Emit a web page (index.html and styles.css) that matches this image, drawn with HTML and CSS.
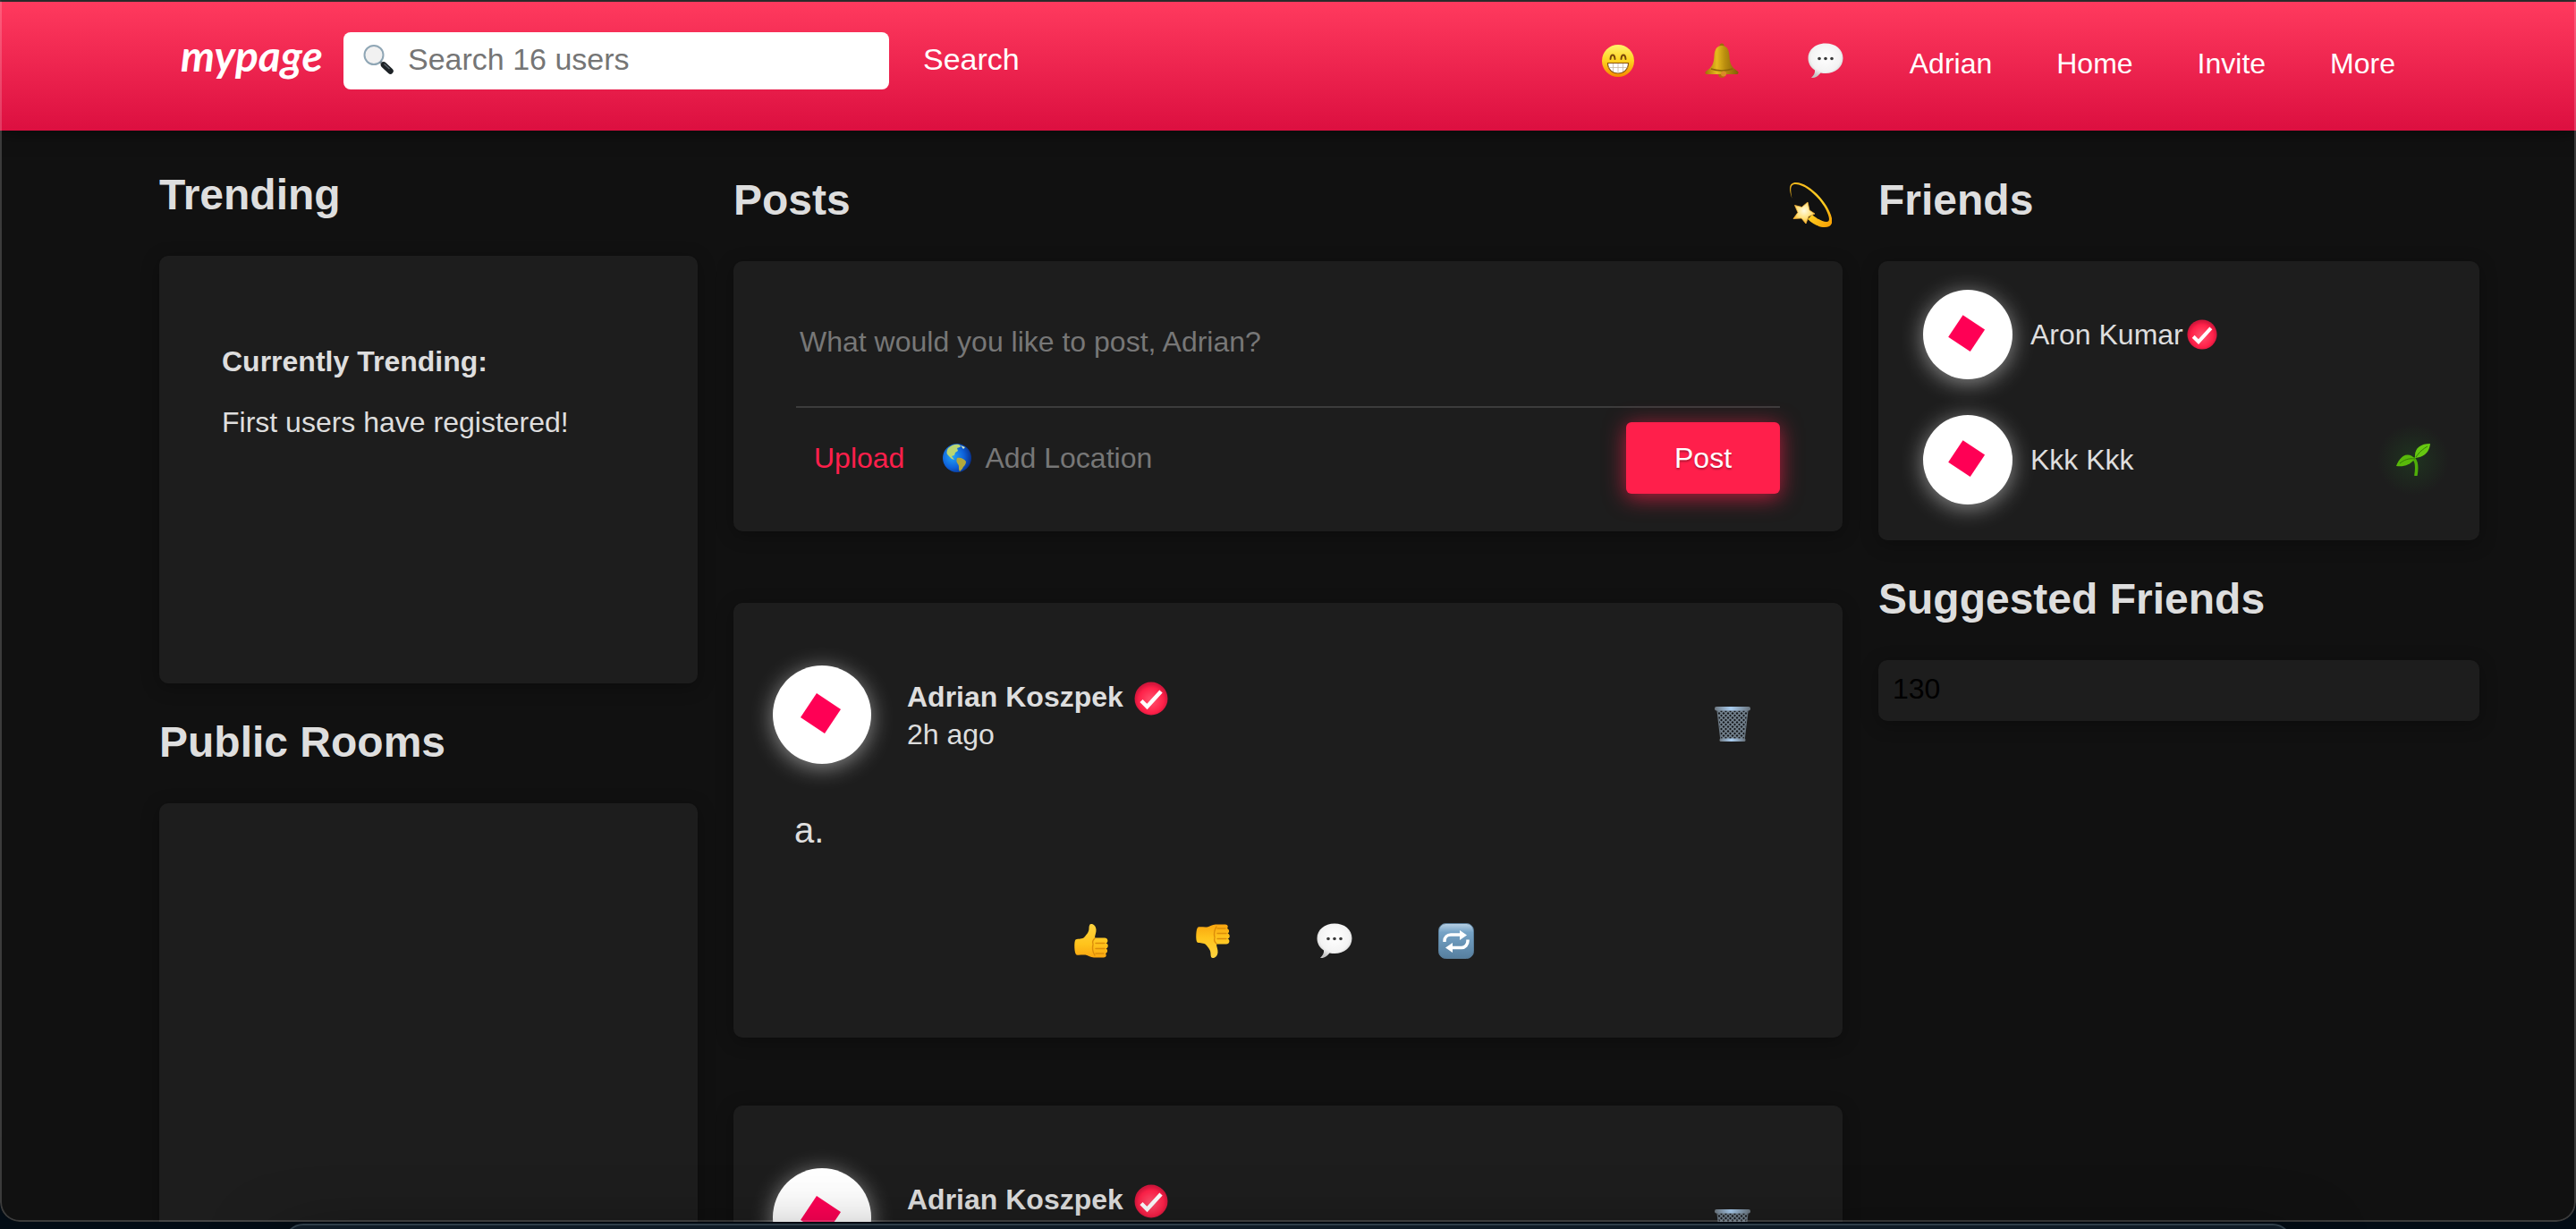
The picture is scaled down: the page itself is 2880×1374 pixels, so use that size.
FILE: index.html
```html
<!DOCTYPE html>
<html lang="en">
<head>
<meta charset="utf-8">
<meta name="viewport" content="width=device-width, initial-scale=1">
<title>mypage</title>
<link rel="stylesheet" href="styles.css">
</head>
<body>
<svg class="sprite" aria-hidden="true">
  <defs>
    <linearGradient id="g-face" x1="0" y1="0" x2="0" y2="1"><stop offset="0" stop-color="#fff36b"/><stop offset=".5" stop-color="#ffd21f"/><stop offset="1" stop-color="#f58a00"/></linearGradient>
    <linearGradient id="g-bell" x1="0" y1="0" x2="1" y2="0"><stop offset="0" stop-color="#a06e05"/><stop offset=".35" stop-color="#e6ba1e"/><stop offset=".6" stop-color="#b98d0e"/><stop offset="1" stop-color="#815b06"/></linearGradient>
    <radialGradient id="g-bubble" cx=".5" cy=".4" r=".6"><stop offset="0" stop-color="#fff"/><stop offset=".7" stop-color="#f3f3f3"/><stop offset="1" stop-color="#c4c4c4"/></radialGradient>
    <linearGradient id="g-hand" x1="0" y1="0" x2="0" y2="1"><stop offset="0" stop-color="#ffd340"/><stop offset=".6" stop-color="#ffc41c"/><stop offset="1" stop-color="#f9a510"/></linearGradient>
    <linearGradient id="g-repeat" x1="0" y1="0" x2="0" y2="1"><stop offset="0" stop-color="#b9d2e6"/><stop offset=".25" stop-color="#76a3c6"/><stop offset="1" stop-color="#567f9f"/></linearGradient>
    <radialGradient id="g-globe" cx=".35" cy=".45" r=".65"><stop offset="0" stop-color="#23a4f7"/><stop offset=".6" stop-color="#0f62da"/><stop offset="1" stop-color="#07318e"/></radialGradient>
    <radialGradient id="g-check" cx=".5" cy=".55" r=".5"><stop offset="0" stop-color="#ff5470"/><stop offset=".75" stop-color="#ff2149"/><stop offset="1" stop-color="#d4163c"/></radialGradient>
    <linearGradient id="g-orbit" x1="0" y1="0" x2="1" y2="1"><stop offset="0" stop-color="#f3b41c"/><stop offset=".6" stop-color="#ffcf23"/><stop offset="1" stop-color="#f79b00"/></linearGradient>
    <radialGradient id="g-star" cx=".5" cy=".4" r=".6"><stop offset="0" stop-color="#fffbe0"/><stop offset=".6" stop-color="#ffe07a"/><stop offset="1" stop-color="#f7b022"/></radialGradient>
    <linearGradient id="g-metal" x1="0" y1="0" x2="1" y2="0"><stop offset="0" stop-color="#6d7780"/><stop offset=".45" stop-color="#a9cdf0"/><stop offset="1" stop-color="#67717a"/></linearGradient>
    <pattern id="p-mesh" width="5" height="5" patternUnits="userSpaceOnUse"><path d="M0 0l5 5M5 0L0 5" stroke="#75838f" stroke-width="1.5"/></pattern>
  </defs>
  <symbol id="i-search" viewBox="0 0 34 34">
    <circle cx="12" cy="12.500" r="10.500" fill="#f1f1f1" stroke="#8fa6b5" stroke-width="2"/>
    <path d="M19 20l4 3.500" stroke="#7a8790" stroke-width="3"/>
    <path d="M23 23.500l7.500 7" stroke="#1d2226" stroke-width="6.500" stroke-linecap="round"/>
    <path d="M23.500 22.500l6 5.500" stroke="#59636b" stroke-width="1.500"/>
  </symbol>
  <symbol id="i-smile" viewBox="0 0 40 40">
    <circle cx="20" cy="20" r="18" fill="url(#g-face)"/>
    <path d="M11.500 18c.5-6 4.500-6 5 0M23.500 18c.5-6 4.500-6 5 0" fill="none" stroke="#7a4708" stroke-width="2" stroke-linecap="round"/>
    <path d="M8.500 22.500h23c0 7-5 11.500-11.500 11.500S8.500 29.500 8.500 22.500z" fill="#fff" stroke="#8a5310" stroke-width="1.200"/>
    <path d="M9.500 27.500h21M14.500 23v9M20 23v11M25.500 23v9" stroke="#c9b9a2" stroke-width=".8"/>
  </symbol>
  <symbol id="i-bell" viewBox="0 0 40 40">
    <circle cx="20" cy="35" r="4" fill="#b5690f"/>
    <circle cx="20" cy="3" r="2.500" fill="#9a6f08"/>
    <path d="M20 3c-6 0-8 5-8.500 11-.5 9-2 13-9 17.500-2 1.500-1 3.500 1 3.500h33c2 0 3-2 1-3.500-7-4.500-8.500-8.500-9-17.500C28 8 26 3 20 3z" fill="url(#g-bell)"/>
    <path d="M8 29c7 2.500 17 2.500 24 0" fill="none" stroke="#8d6508" stroke-width="1.500"/>
    <circle cx="22" cy="34.500" r="3" fill="#d98b26"/>
  </symbol>
  <symbol id="i-bubble" viewBox="0 0 40 40">
    <path d="M20 0.500C9 .5.500 7.500.500 17c0 6 3 10.500 7.500 13.500.5 3-1.500 6-4 8.500 5 .5 8-2.500 10.500-5.500 2 .5 3.500.5 5.500.5 11 0 19.500-7 19.500-17S31 .5 20 .5z" fill="url(#g-bubble)"/>
    <g fill="#3a3a3a"><circle cx="13" cy="17.500" r="1.800"/><circle cx="20" cy="17.500" r="1.800"/><circle cx="27" cy="17.500" r="1.800"/></g>
  </symbol>
  <symbol id="i-thumb" viewBox="0 0 40 40">
    <path d="M2.500 18.500C6 17 10 18.500 12.500 15.500c2.500-3 5-5.500 5-9.500 0-3 .5-5 2.500-5 3 0 5 2.500 5.500 6 .4 3.500-1.500 6.500-1.500 9.500h11c4 0 4.500 5 1.500 6 3 .7 3 5 0 6 2.500 1 2 5-.8 5.500 2 1.500 1 4.500-1.700 4.500H23c-4 0-6-2.500-9.500-3-3.500-.3-7 .5-10 0C1 34.500.5 20.500 2.500 18.500z" fill="url(#g-hand)"/>
    <path d="M35 22.500H25M35 28.500H25M34 34H25M24 17c-2 2-3 4-2 6M22 24c-1 4 0 9 2 12" fill="none" stroke="#dc8d0a" stroke-width="1.400" stroke-linecap="round"/>
  </symbol>
  <symbol id="i-repeat" viewBox="0 0 40 40">
    <rect x=".5" y=".5" width="39" height="39" rx="8" fill="url(#g-repeat)" stroke="#587b96"/>
    <path d="M7 21v-1c0-4 3-7 7-7h11M33 18.500v1.500c0 4-3 7.500-7 7.500H15" fill="none" stroke="#fff" stroke-width="3.500"/>
    <path d="M24 8l8 5.500-8 5.500zM16 22l-8 5.500 8 5.500z" fill="#fff"/>
  </symbol>
  <symbol id="i-globe" viewBox="0 0 34 34">
    <circle cx="17" cy="17" r="16" fill="url(#g-globe)"/>
    <path d="M7 6c4-4 9-5 12-4 2 1 3 2 1 3l-3 1 1 3-3 2-1 3-3 1 3 4-3-1-4-4C5 12 5 9 7 6z" fill="#b9d673"/>
    <path d="M17 17c4-1 8 1 10 4 0 4-3 5-4 8l-3 3c-2-3 0-6-2-8-2-3-2-4-1-7z" fill="#b3a83c"/>
    <path d="M21 3l5 2-2 2z" fill="#d7ecc0"/>
  </symbol>
  <symbol id="i-check" viewBox="0 0 38 38">
    <circle cx="19" cy="19" r="18.500" fill="url(#g-check)"/>
    <path d="M8 21.500l6.500 6.500L30 11" fill="none" stroke="#fff" stroke-width="4.500"/>
  </symbol>
  <symbol id="i-dizzy" viewBox="0 0 48 50">
    <path d="M3.500 18C-1 5 1 0 8 0c14 0 36 22 40 40 1.500 7-2 10-8 10-6 0-13-3-19-9l5-5c6 5 12 8 16 8 3 0 3.500-2 2.500-6C41 24 22 3 8 2c-6-.5-7 4-4.500 16z" fill="url(#g-orbit)"/>
    <path d="M21 22l2 9 6 4-7 3-3 8-5-6-9 .500 5-7-3.500-8 8 2z" fill="url(#g-star)" stroke="#f0b038" stroke-width=".8"/>
  </symbol>
  <symbol id="i-bin" viewBox="0 0 40 40">
    <path d="M3 4h34l-4 34H7z" fill="#14171a"/>
    <path d="M3 4h34l-4 34H7z" fill="url(#p-mesh)" stroke="#66727c" stroke-width="1.200"/>
    <rect x="5.500" y="35.500" width="29" height="3.500" rx="1.500" fill="url(#g-metal)"/>
    <rect x="0" y="0" width="40" height="4.500" rx="2" fill="url(#g-metal)"/>
  </symbol>
  <symbol id="i-seedling" viewBox="0 0 38 36">
    <path d="M20 17c4 5 3 12 2 18" fill="none" stroke="#4fae08" stroke-width="3.500" stroke-linecap="round"/>
    <path d="M21 17C14 9 5 12 0 25c9 1 15-1 21-8z" fill="#58b80a"/>
    <path d="M21 16C20 5 27 0 38 0c-1 10-7 15-17 16z" fill="#66c811"/>
    <path d="M4 22c5-4 10-6 17-5M22 15c4-6 8-9 13-12" fill="none" stroke="#357d05" stroke-width="1"/>
  </symbol>
  <symbol id="i-diamond" viewBox="0 0 110 110">
    <path d="M49 31l27 18-18 27-27-18z" fill="#ff0055"/>
  </symbol>
</svg>

<div class="window">
  <header class="topbar">
    <a class="logo" href="#">mypage</a>
    <form class="search" role="search">
      <label class="search-box">
        <svg class="search-icon" aria-hidden="true"><use href="#i-search"/></svg>
        <input class="search-input" type="search" aria-label="Search users" placeholder="Search 16 users">
      </label>
      <button class="search-button" type="button">Search</button>
    </form>
    <nav class="nav">
      <button class="nav-icon" type="button" aria-label="Mood"><svg><use href="#i-smile"/></svg></button>
      <button class="nav-icon" type="button" aria-label="Notifications"><svg><use href="#i-bell"/></svg></button>
      <button class="nav-icon" type="button" aria-label="Messages"><svg><use href="#i-bubble"/></svg></button>
      <a class="nav-link" href="#">Adrian</a>
      <a class="nav-link" href="#">Home</a>
      <a class="nav-link" href="#">Invite</a>
      <a class="nav-link" href="#">More</a>
    </nav>
  </header>

  <main class="columns">
    <aside class="column">
      <h2 class="heading">Trending</h2>
      <section class="card trending">
        <strong>Currently Trending:</strong>
        <p>First users have registered!</p>
      </section>
      <h2 class="heading">Public Rooms</h2>
      <section class="card rooms"></section>
    </aside>

    <section class="column column-low">
      <div class="heading-row">
        <h2 class="heading">Posts</h2>
        <button class="shuffle" type="button" aria-label="Surprise me"><svg><use href="#i-dizzy"/></svg></button>
      </div>
      <form class="card composer">
        <textarea class="composer-text" aria-label="New post" placeholder="What would you like to post, Adrian?"></textarea>
        <div class="composer-tools">
          <button class="upload" type="button">Upload</button>
          <label class="location">
            <svg class="location-icon" aria-hidden="true"><use href="#i-globe"/></svg>
            <input class="location-input" type="text" aria-label="Location" placeholder="Add Location">
          </label>
          <button class="post-button" type="button">Post</button>
        </div>
      </form>

      <div class="feed">
        <article class="card post">
          <div class="post-head">
            <svg class="avatar avatar-large" aria-hidden="true"><use href="#i-diamond"/></svg>
            <div class="post-meta">
              <div class="author"><strong>Adrian Koszpek</strong><svg class="badge-large" aria-hidden="true"><use href="#i-check"/></svg></div>
              <time>2h ago</time>
            </div>
            <button class="delete" type="button" aria-label="Delete post"><svg><use href="#i-bin"/></svg></button>
          </div>
          <p class="post-text">a.</p>
          <div class="actions">
            <button class="action" type="button" aria-label="Like"><svg><use href="#i-thumb"/></svg></button>
            <button class="action action-down" type="button" aria-label="Dislike"><svg><use href="#i-thumb"/></svg></button>
            <button class="action" type="button" aria-label="Comment"><svg><use href="#i-bubble"/></svg></button>
            <button class="action" type="button" aria-label="Repost"><svg><use href="#i-repeat"/></svg></button>
          </div>
        </article>
        <article class="card post">
          <div class="post-head">
            <svg class="avatar avatar-large" aria-hidden="true"><use href="#i-diamond"/></svg>
            <div class="post-meta">
              <div class="author"><strong>Adrian Koszpek</strong><svg class="badge-large" aria-hidden="true"><use href="#i-check"/></svg></div>
            </div>
            <button class="delete" type="button" aria-label="Delete post"><svg><use href="#i-bin"/></svg></button>
          </div>
        </article>
      </div>
    </section>

    <aside class="column column-low">
      <h2 class="heading">Friends</h2>
      <ul class="card friends">
        <li class="friend">
          <svg class="avatar" aria-hidden="true"><use href="#i-diamond"/></svg>
          <a class="friend-name" href="#">Aron Kumar<svg class="badge" aria-hidden="true"><use href="#i-check"/></svg></a>
        </li>
        <li class="friend">
          <svg class="avatar" aria-hidden="true"><use href="#i-diamond"/></svg>
          <a class="friend-name" href="#">Kkk Kkk</a>
          <span class="newcomer"><svg aria-hidden="true"><use href="#i-seedling"/></svg></span>
        </li>
      </ul>
      <h2 class="heading">Suggested Friends</h2>
      <section class="card suggested">130</section>
    </aside>
  </main>
</div>
<div class="desktop-strip"><div class="front-window"></div></div>
</body>
</html>
```

FILE: styles.css
```css
* {
  box-sizing: border-box;
}

html {
  overflow: hidden;
}

body {
  margin: 0;
  height: 100vh;
  display: flex;
  flex-direction: column;
  overflow: hidden;
  background: #030c15;
  color: #dedede;
  font-family: "Liberation Sans", Arial, sans-serif;
  font-size: 32px;
  line-height: 40px;
}

.sprite {
  position: absolute;
  width: 0;
  height: 0;
}

button,
input,
textarea {
  margin: 0;
  padding: 0;
  border: 0;
  outline: 0;
  background: none;
  color: inherit;
  font: inherit;
}

button {
  cursor: pointer;
}

a {
  color: inherit;
  text-decoration: none;
}

p,
h2,
ul {
  margin: 0;
  padding: 0;
}

svg {
  display: block;
}

/* window frame */
.window {
  position: relative;
  flex: 1;
  min-height: 0;
  padding-top: 2px;
  overflow: hidden;
  border-radius: 0 0 22px 22px;
  background: #111;
}

.window::after {
  content: "";
  position: absolute;
  inset: 0;
  border: 2px solid rgba(255, 255, 255, 0.18);
  border-top-color: rgba(255, 255, 255, 0.12);
  border-radius: 0 0 22px 22px;
  pointer-events: none;
}

.desktop-strip {
  position: relative;
  flex: 0 0 8px;
  min-height: 0;
  padding: 2px 11% 0;
}

.front-window {
  height: 60vh;
  border: 2px solid #2f3e49;
  border-radius: 22px;
  background: #101c27;
  box-shadow: 0 30px 80px rgba(0, 0, 0, 0.6);
}

/* top bar */
.topbar {
  position: relative;
  display: flex;
  align-items: flex-start;
  justify-content: space-between;
  height: 144px;
  padding: 34px 202px 0;
  background: linear-gradient(#ff3a5e, #dc0f40);
  box-shadow: 0 0 20px rgba(0, 0, 0, 0.6);
  color: #fff;
}

.logo {
  flex: 0 0 182px;
  font-family: Lato, sans-serif;
  font-size: 48px;
  font-style: italic;
  font-weight: 700;
  line-height: 52px;
}

.search {
  display: flex;
  flex: 1;
  font-size: 34px;
}

.search-box {
  display: flex;
  align-items: center;
  gap: 16px;
  flex: 0 1 610px;
  height: 64px;
  padding: 0 22px 4px;
  border-radius: 8px;
  background: #fff;
}

.search-icon {
  flex: none;
  width: 34px;
  height: 34px;
}

.search-input {
  flex: 1;
  min-width: 0;
  color: #222;
}

.search-input::placeholder {
  color: #757575;
  opacity: 1;
}

.search-button {
  height: 64px;
  padding: 0 38px 4px;
}

.nav {
  display: flex;
  gap: 72px;
}

.nav-icon {
  display: flex;
  align-items: center;
  justify-content: center;
  width: 44px;
  height: 64px;
}

.nav-icon svg,
.action svg,
.delete svg {
  width: 40px;
  height: 40px;
}

.nav-link {
  line-height: 70px;
}

/* page columns */
.columns {
  display: grid;
  grid-template-columns: 602fr 1240fr 672fr;
  gap: 40px;
  padding: 6px 108px 0 178px;
}

.column {
  min-width: 0;
}

.column-low {
  padding-top: 6px;
}

.heading {
  margin: 38px 0 40px;
  font-size: 48px;
  line-height: 56px;
}

.heading-row {
  display: flex;
  align-items: center;
  justify-content: space-between;
  padding-right: 12px;
}

.shuffle {
  padding-top: 8px;
}

.shuffle svg {
  width: 48px;
  height: 50px;
}

.card {
  border-radius: 10px;
  background: #1d1d1d;
  box-shadow: 0 4px 20px rgba(0, 0, 0, 0.3);
}

.trending {
  display: flex;
  flex-direction: column;
  gap: 28px;
  min-height: 478px;
  padding: 98px 70px;
}

.rooms {
  min-height: 478px;
}

/* composer */
.composer {
  padding: 60px 70px 42px;
}

.composer-text {
  display: block;
  width: 100%;
  height: 104px;
  padding: 10px 4px;
  border-bottom: 2px solid #3c3c3c;
  resize: none;
  overflow: hidden;
}

.composer-text::placeholder,
.location-input::placeholder {
  color: #777;
  opacity: 1;
}

.composer-tools {
  display: flex;
  align-items: center;
  gap: 42px;
  margin-top: 16px;
  padding-left: 20px;
}

.upload {
  color: #ff1f4b;
}

.location {
  display: flex;
  align-items: center;
  gap: 14px;
  flex: 1;
}

.location-icon {
  flex: none;
  width: 34px;
  height: 34px;
}

.location-input {
  flex: 1;
  min-width: 0;
}

.post-button {
  width: 172px;
  height: 80px;
  border-radius: 6px;
  background: #ff1f4b;
  box-shadow: 0 4px 24px rgba(255, 31, 75, 0.7);
  color: #fff;
  text-shadow: 0 2px 2px rgba(0, 0, 0, 0.3);
}

/* feed */
.feed {
  display: flex;
  flex-direction: column;
  gap: 76px;
  margin-top: 80px;
}

.post {
  padding: 70px 44px 88px;
}

.post-head {
  display: flex;
  align-items: flex-start;
  gap: 40px;
  padding-right: 59px;
}

.avatar {
  flex: none;
  width: 100px;
  height: 100px;
  border-radius: 50%;
  background: #fff;
  box-shadow: 0 4px 24px rgba(255, 255, 255, 0.5);
}

.avatar-large {
  width: 110px;
  height: 110px;
}

.post-meta {
  flex: 1;
  padding-top: 14px;
  line-height: 42px;
}

.author {
  display: flex;
  align-items: flex-end;
  gap: 12px;
}

.badge-large {
  width: 38px;
  height: 38px;
}

.delete {
  align-self: flex-end;
  margin-bottom: 24px;
}

.post-text {
  margin-top: 50px;
  padding-left: 24px;
  font-size: 40px;
  line-height: 48px;
}

.actions {
  display: flex;
  justify-content: center;
  gap: 96px;
  margin-top: 80px;
  padding-right: 32px;
}

.action-down svg {
  transform: scaleY(-1);
}

/* friends */
.friends {
  display: flex;
  flex-direction: column;
  gap: 40px;
  padding: 32px 34px 40px 50px;
  list-style: none;
}

.friend {
  display: flex;
  align-items: center;
  gap: 20px;
}

.friend-name {
  display: flex;
  align-items: center;
  gap: 4px;
}

.badge {
  width: 34px;
  height: 34px;
}

.newcomer {
  display: grid;
  place-items: center;
  width: 80px;
  height: 80px;
  margin-left: auto;
  border-radius: 50%;
  background: radial-gradient(closest-side, #1f3320, #1d1d1d);
}

.newcomer svg {
  width: 38px;
  height: 36px;
}

.suggested {
  padding: 12px 16px 16px;
  color: #000;
}
```
